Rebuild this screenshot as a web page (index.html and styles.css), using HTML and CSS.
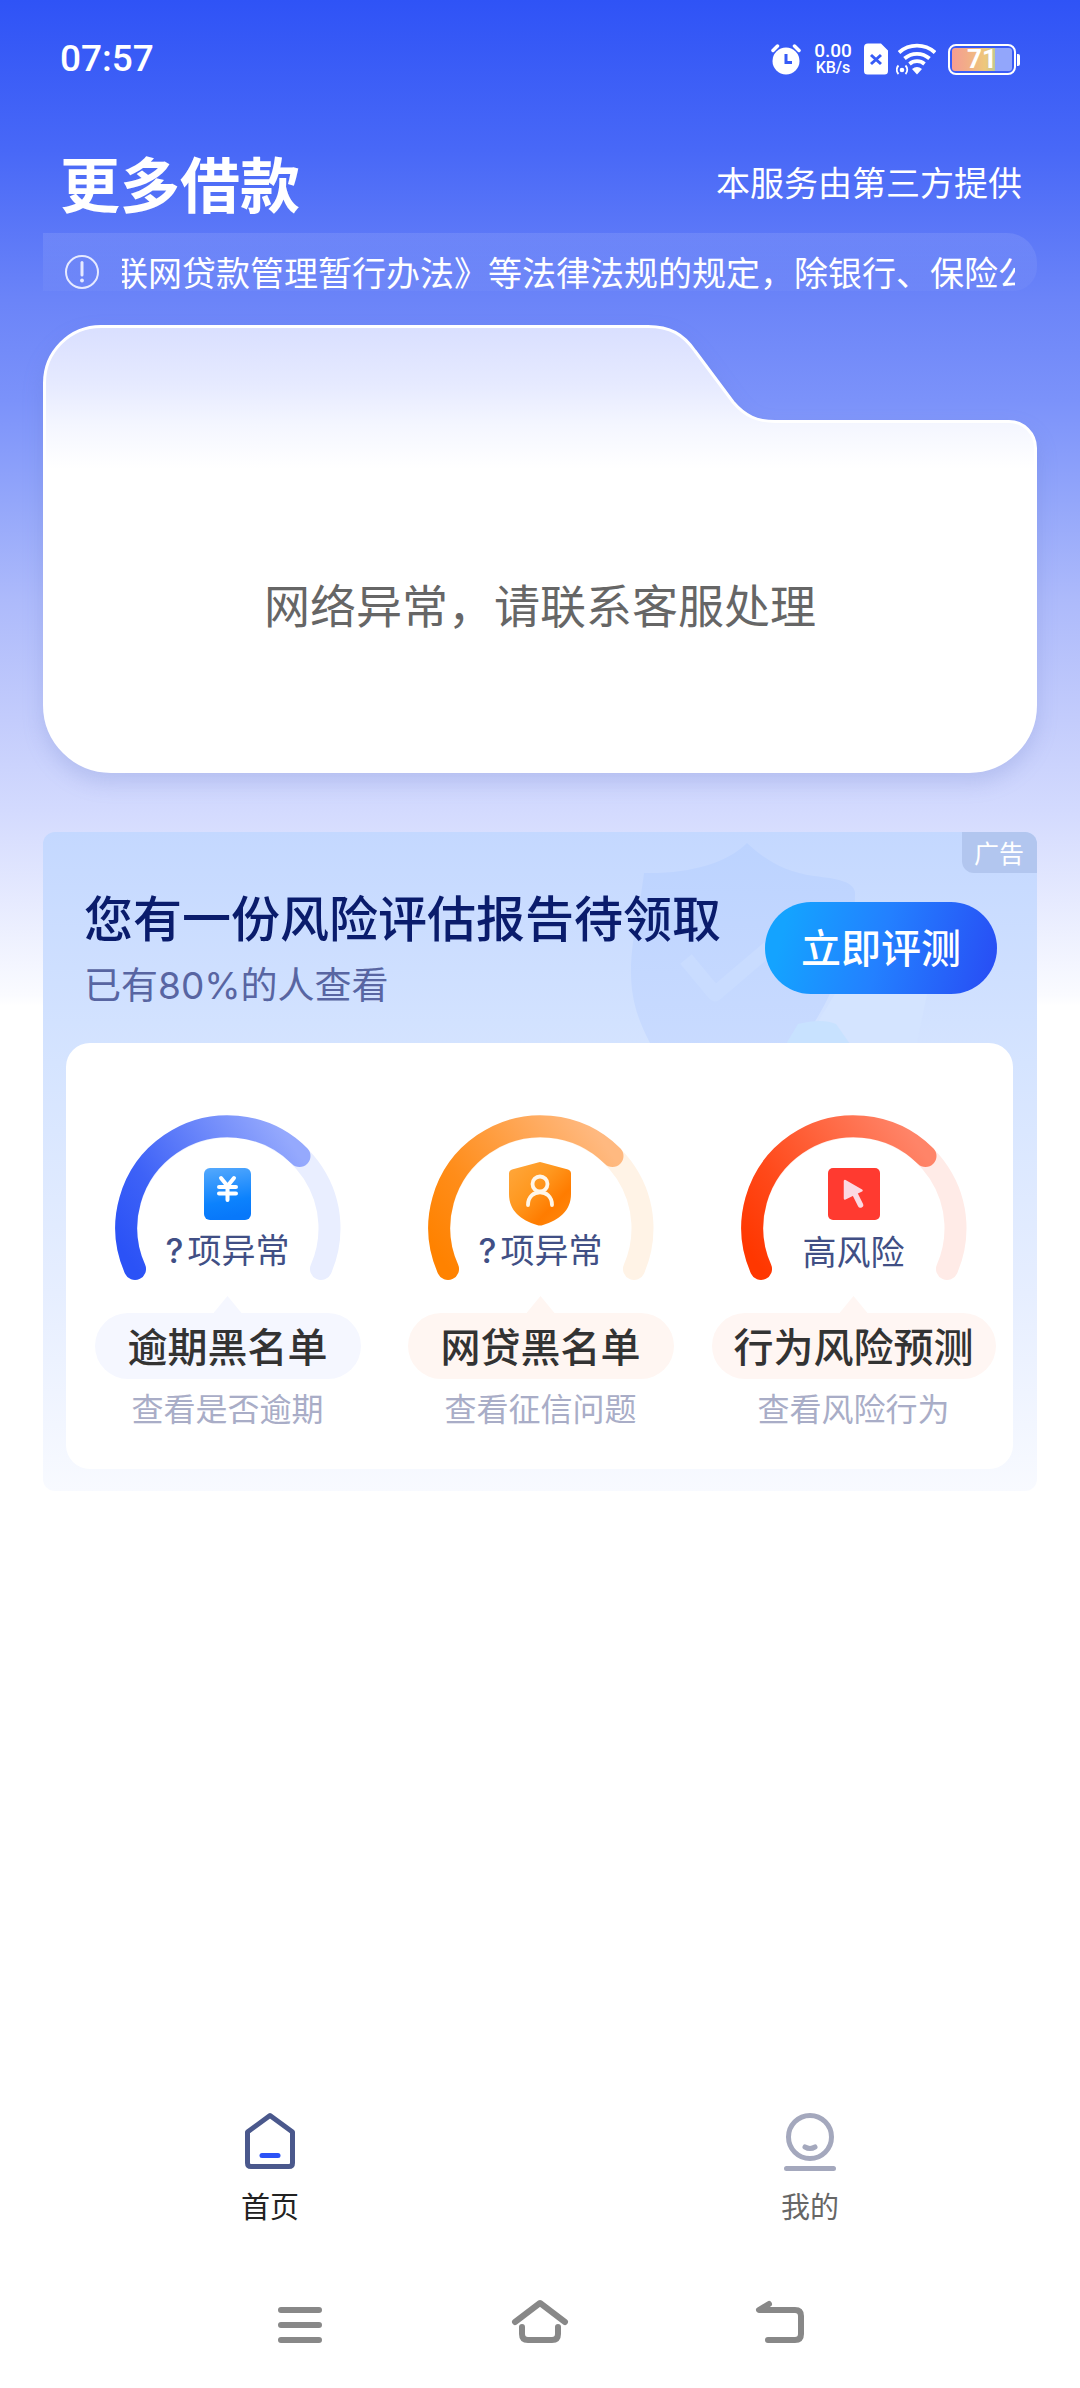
FILE: index.html
```html
<!DOCTYPE html>
<html lang="zh-CN">
<head>
<meta charset="utf-8">
<meta name="viewport" content="width=device-width, initial-scale=1">
<title>更多借款</title>
<link rel="stylesheet" href="styles.css">
</head>
<body>
<div class="status-bar">
  <time class="clock">07:57</time>
  <div class="status-icons">
    <svg class="alarm" width="30" height="32" viewBox="0 0 30 32" aria-hidden="true">
      <circle cx="15" cy="18" r="13.500" fill="#fff"/>
      <path d="M2 7.500 6.500 3M28 7.500 23.500 3" stroke="#fff" stroke-width="3.500" stroke-linecap="round"/>
      <path d="M15 11v8.500h6" fill="none" stroke="#365bf6" stroke-width="3"/>
    </svg>
    <div class="net-speed"><span class="net-value">0.00</span><span class="net-unit">KB/s</span></div>
    <svg class="sim" width="24" height="32" viewBox="0 0 24 32" aria-hidden="true">
      <path d="M4 .5h13l7 7V28a3.500 3.500 0 0 1-3.500 3.500h-17A3.500 3.500 0 0 1 0 28V4.500a4 4 0 0 1 4-4z" fill="#fff"/>
      <path d="m7 12 10 9m0-9-10 9" stroke="#365bf6" stroke-width="3"/>
    </svg>
    <svg class="wifi" width="40" height="32" viewBox="0 0 40 32" aria-hidden="true">
      <g fill="none" stroke="#fff" stroke-width="3.800">
        <path d="M3 9.500a27 27 0 0 1 36 0"/>
        <path d="M8.500 15.500a19 19 0 0 1 25 0"/>
        <path d="M13.500 21a11.500 11.500 0 0 1 15 0"/>
      </g>
      <path d="M16 26a8 8 0 0 1 10 0l-5 5.500z" fill="#fff"/>
      <circle cx="6" cy="27" r="2.300" fill="#fff"/>
      <path d="M2.500 22.500a6 6 0 0 0 0 8.500M9.500 22.500a6 6 0 0 1 0 8.500" fill="none" stroke="#fff" stroke-width="1.800"/>
    </svg>
    <div class="battery"><span class="battery-level">71</span></div>
  </div>
</div>

<header class="page-header">
  <h1 class="page-title">更多借款</h1>
  <p class="provider">本服务由第三方提供</p>
</header>

<main class="content">
  <div class="notice">
    <svg class="notice-icon" width="36" height="36" viewBox="0 0 36 36" aria-hidden="true">
      <circle cx="18" cy="18" r="16" fill="none" stroke="#e6eaff" stroke-width="2"/>
      <path d="M18 8.500v12.500" stroke="#e6eaff" stroke-width="3" stroke-linecap="round"/>
      <circle cx="18" cy="26.500" r="1.900" fill="#e6eaff"/>
    </svg>
    <div class="marquee"><p class="marquee-text">联网贷款管理暂行办法》等法律法规的规定，除银行、保险公司</p></div>
  </div>

  <section class="folder">
    <svg class="folder-shape" viewBox="0 0 994 448" preserveAspectRatio="none" aria-hidden="true">
      <defs>
        <linearGradient id="folderFill" x1="0" y1="0" x2="0" y2="1">
          <stop offset="0" stop-color="#d9dfff"/>
          <stop offset=".13" stop-color="#e6eaff"/>
          <stop offset=".22" stop-color="#f4f6ff"/>
          <stop offset=".32" stop-color="#fff"/>
        </linearGradient>
      </defs>
      <path d="M58 1.500H605C627 1.500 640 9 652 26L690 77C702 91 714 96.500 732 96.500H966A26.500 26.500 0 0 1 992.500 123V380A66.500 66.500 0 0 1 926 446.500H68A66.500 66.500 0 0 1 1.500 380V58A56.500 56.500 0 0 1 58 1.500Z" fill="url(#folderFill)" stroke="#fff" stroke-width="3"/>
    </svg>
    <p class="folder-message">网络异常，请联系客服处理</p>
  </section>

  <section class="promo">
    <svg class="promo-art" width="310" height="211" viewBox="0 0 310 211" aria-hidden="true">
      <defs>
        <linearGradient id="artShield" x1="0" y1="0" x2="0" y2="1">
          <stop offset="0" stop-color="#bcd3ff"/>
          <stop offset="1" stop-color="#c9dbff"/>
        </linearGradient>
      </defs>
      <path d="M117 11C97 31 60 42 14 41C9 82 1 108 1 140C1 170 9 192 26 222H160C200 180 226 110 225 60C223 50 210 47 184 44C156 40 136 29 117 11Z" fill="url(#artShield)"/>
      <path d="m56 127 29 35 54-46" fill="none" stroke="#c9dcff" stroke-width="15" stroke-linejoin="round"/>
      <path d="M205 162h92l-10 49H175z" fill="#d4e4ff"/>
      <path d="M168 192q24-6 38 0l14 20h-64z" fill="#c8e2ff"/>
    </svg>
    <span class="ad-tag">广告</span>
    <div class="promo-head">
      <div class="promo-copy">
        <h2 class="promo-title">您有一份风险评估报告待领取</h2>
        <p class="promo-sub">已有80%的人查看</p>
      </div>
      <button class="promo-button" type="button">立即评测</button>
    </div>
    <ul class="checks">
      <li class="check check-blue">
        <div class="gauge">
          <svg class="gauge-arc" width="226" height="168" viewBox="0 0 226 168" aria-hidden="true">
            <defs>
              <linearGradient id="arcBlue" gradientUnits="userSpaceOnUse" x1="20" y1="155" x2="185" y2="42">
                <stop offset="0" stop-color="#2b52f6"/><stop offset=".3" stop-color="#3e62f7"/><stop offset="1" stop-color="#95a9fd"/>
              </linearGradient>
              <linearGradient id="noteBlue" x1="0" y1="0" x2=".15" y2="1">
                <stop offset="0" stop-color="#55a9fd"/><stop offset=".7" stop-color="#0c82fd"/><stop offset="1" stop-color="#0878fa"/>
              </linearGradient>
            </defs>
            <path class="track" d="M20 155A101.500 101.500 0 1 1 206 155"/>
            <path class="value" d="M20 155A101.500 101.500 0 0 1 184.500 42" stroke="url(#arcBlue)"/>
            <rect x="89" y="54" width="47" height="52" rx="6" fill="url(#noteBlue)"/>
            <path d="m106 64 6.500 8 6.500-8M112.500 72v14M104 73h17M104 79.500h17" fill="none" stroke="#fff" stroke-width="4" stroke-linecap="round"/>
          </svg>
          <p class="gauge-text"><b class="unknown">?</b>项异常</p>
        </div>
        <h3 class="pill">逾期黑名单</h3>
        <p class="check-note">查看是否逾期</p>
      </li>
      <li class="check check-orange">
        <div class="gauge">
          <svg class="gauge-arc" width="226" height="168" viewBox="0 0 226 168" aria-hidden="true">
            <defs>
              <linearGradient id="arcOrange" gradientUnits="userSpaceOnUse" x1="20" y1="155" x2="185" y2="42">
                <stop offset="0" stop-color="#ff8200"/><stop offset=".3" stop-color="#ff8d1a"/><stop offset="1" stop-color="#ffb980"/>
              </linearGradient>
              <linearGradient id="shieldOrange" x1="0" y1="0" x2="1" y2="1">
                <stop offset="0" stop-color="#ffa83e"/><stop offset=".4" stop-color="#ff981f"/><stop offset=".7" stop-color="#ff7c00"/><stop offset="1" stop-color="#ff8a10"/>
              </linearGradient>
            </defs>
            <path class="track" d="M20 155A101.500 101.500 0 1 1 206 155"/>
            <path class="value" d="M20 155A101.500 101.500 0 0 1 184.500 42" stroke="url(#arcOrange)"/>
            <path d="M110 48.500q2-1 4 0l26 7q3 1 3 4V80c0 17-12 26-28 31q-3 1-6 0C93 106 81 97 81 80V59.500q0-3 3-4z" fill="url(#shieldOrange)"/>
            <g fill="none" stroke="#fff6e8" stroke-width="3.800" stroke-linecap="round">
              <circle cx="112" cy="70" r="7.500"/>
              <path d="M100 91c0-17 24-17 24 0"/>
            </g>
          </svg>
          <p class="gauge-text"><b class="unknown">?</b>项异常</p>
        </div>
        <h3 class="pill">网贷黑名单</h3>
        <p class="check-note">查看征信问题</p>
      </li>
      <li class="check check-red">
        <div class="gauge">
          <svg class="gauge-arc" width="226" height="168" viewBox="0 0 226 168" aria-hidden="true">
            <defs>
              <linearGradient id="arcRed" gradientUnits="userSpaceOnUse" x1="20" y1="155" x2="185" y2="42">
                <stop offset="0" stop-color="#ff3700"/><stop offset=".3" stop-color="#ff491a"/><stop offset="1" stop-color="#ff8468"/>
              </linearGradient>
            </defs>
            <path class="track" d="M20 155A101.500 101.500 0 1 1 206 155"/>
            <path class="value" d="M20 155A101.500 101.500 0 0 1 184.500 42" stroke="url(#arcRed)"/>
            <rect x="87" y="54" width="52" height="52" rx="5" fill="#ff3a30"/>
            <path d="M104 67v17.500l16.500-8z" fill="#fbd9e2" stroke="#fbd9e2" stroke-width="2.500" stroke-linejoin="round"/>
            <path d="m113.500 79 6 12" stroke="#fbd9e2" stroke-width="5.500" stroke-linecap="round"/>
          </svg>
          <p class="gauge-text">高风险</p>
        </div>
        <h3 class="pill">行为风险预测</h3>
        <p class="check-note">查看风险行为</p>
      </li>
    </ul>
  </section>
</main>

<nav class="tab-bar">
  <a class="tab tab-active" href="#home">
    <svg width="60" height="60" viewBox="0 0 60 60" fill="none" stroke-linecap="round" stroke-linejoin="round" aria-hidden="true">
      <path d="M30 4.500 52.500 21V52q0 3.500-3.500 3.500H11q-3.500 0-3.500-3.500V21z" stroke="#4a588c" stroke-width="5"/>
      <path d="M22 44.500h16" stroke="#2b52f6" stroke-width="5"/>
    </svg>
    <span>首页</span>
  </a>
  <a class="tab" href="#mine">
    <svg width="60" height="60" viewBox="0 0 60 60" fill="none" stroke="#a4a8bd" stroke-width="5" stroke-linecap="round" aria-hidden="true">
      <circle cx="30" cy="26" r="21.500"/>
      <path d="M25 36q5 3 10 0M6.500 57.500h47"/>
    </svg>
    <span>我的</span>
  </a>
</nav>

<div class="system-nav">
  <button class="system-key" type="button" aria-label="最近任务">
    <svg width="60" height="50" viewBox="0 0 60 50"><path d="M11 12h38M11 27h38M11 42h38"/></svg>
  </button>
  <button class="system-key" type="button" aria-label="主屏幕">
    <svg width="60" height="50" viewBox="0 0 60 50"><path d="M5 24 30 5l25 19M12 29v7q0 6 6 6h24q6 0 6-6v-7"/></svg>
  </button>
  <button class="system-key" type="button" aria-label="返回">
    <svg width="60" height="50" viewBox="0 0 60 50"><path d="M19 6 9 12h36q6 0 6 6v18q0 6-6 6H18"/></svg>
  </button>
</div>
</body>
</html>
```
FILE: styles.css
```css
* {
  box-sizing: border-box;
  margin: 0;
  padding: 0;
}

body {
  display: flex;
  flex-direction: column;
  min-height: 100vh;
  background: #fff linear-gradient(
    #2f53f6 0,
    #4868f7 150px,
    #6b84f8 300px,
    #7b92fa 400px,
    #93a6fa 500px,
    #adbafb 600px,
    #c3ccfc 720px,
    #d3dafe 810px,
    #fafbff 995px,
    #fff 1006px
  ) no-repeat;
  color: #333;
  font-family: "Noto Sans CJK SC", sans-serif;
}

h1, h2, h3 {
  font-weight: 500;
}

ul {
  list-style: none;
}

svg {
  display: block;
}

button {
  border: 0;
  background: none;
  font-family: inherit;
}

/* Status bar */
.status-bar {
  display: flex;
  align-items: center;
  justify-content: space-between;
  height: 118px;
  padding: 0 60px;
  color: #fff;
  font-family: Roboto, sans-serif;
  font-weight: 500;
}

.clock {
  font-size: 37px;
  line-height: 44px;
}

.status-icons {
  display: flex;
  align-items: center;
}

.net-speed {
  display: flex;
  flex-direction: column;
  align-items: center;
  width: 40px;
  margin: 0 11px 0 12px;
}

.net-value {
  font-size: 19px;
  line-height: 18px;
}

.net-unit {
  font-size: 16px;
  line-height: 16px;
}

.wifi {
  margin: 0 12px 0 8px;
}

.battery {
  position: relative;
  width: 68px;
  height: 31px;
  padding: 2px;
  margin-right: 4px;
  border: 2px solid #fff;
  border-radius: 8px;
}

.battery::after {
  content: "";
  position: absolute;
  top: 8px;
  right: -6px;
  width: 3px;
  height: 12px;
  border-radius: 0 2px 2px 0;
  background: #fff;
}

.battery-level {
  display: block;
  height: 23px;
  border-radius: 3px;
  background: linear-gradient(90deg, #f59d92 0, #f2ad88 25%, #eec87c 55%, #c3c98f 71%, #92a6fb 71%);
  font-size: 26px;
  font-weight: 700;
  line-height: 23px;
  text-align: center;
}

/* Header */
.page-header {
  display: flex;
  align-items: center;
  justify-content: space-between;
  padding: 19px 58px 6px 60px;
  color: #fff;
}

.page-title {
  font-size: 60px;
  font-weight: 700;
  line-height: 90px;
}

.provider {
  font-size: 34px;
  line-height: 50px;
}

.content {
  flex: 1;
  padding: 0 43px;
}

/* Scrolling notice */
.notice {
  display: flex;
  align-items: center;
  height: 58px;
  padding: 19px 22px 0 21px;
  border-radius: 0 30px 24px 0;
  background: linear-gradient(rgba(255, 255, 255, .1), rgba(255, 255, 255, .03));
}

.notice-icon {
  flex: none;
}

.marquee {
  flex: 1;
  min-width: 0;
  margin-left: 22px;
  overflow: hidden;
}

.marquee-text {
  margin-left: -8px;
  color: #fff;
  font-size: 34px;
  line-height: 40px;
  white-space: nowrap;
}

/* Folder card */
.folder {
  position: relative;
  margin-top: 34px;
  padding: 247px 24px 139px;
}

.folder-shape {
  position: absolute;
  inset: 0;
  width: 100%;
  height: 100%;
  overflow: visible;
  filter: drop-shadow(0 10px 10px rgba(90, 110, 190, .2));
}

.folder-message {
  position: relative;
  color: #666;
  font-size: 46px;
  line-height: 62px;
  text-align: center;
}

/* Promo panel */
.promo {
  position: relative;
  margin-top: 59px;
  padding: 0 24px 22px 23px;
  border-radius: 12px;
  background: linear-gradient(#c4d8ff, #d5e4ff 35%, #e6eeff 70%, #f8faff);
  overflow: hidden;
}

.promo-art {
  position: absolute;
  top: 0;
  right: 97px;
}

.ad-tag {
  position: absolute;
  top: 0;
  right: 0;
  padding: 0 13px 1px 12px;
  border-radius: 0 0 0 12px;
  background: #b2c6ef;
  color: #fff;
  font-size: 25px;
  line-height: 40px;
}

.promo-head {
  position: relative;
  display: flex;
  align-items: flex-start;
  justify-content: space-between;
  height: 211px;
  padding: 49px 16px 0 18px;
}

.promo-title {
  color: #0a1c6c;
  font-size: 49px;
  line-height: 70px;
}

.promo-sub {
  margin-top: 8px;
  color: #5865a2;
  font-family: Inter, "Noto Sans CJK SC", sans-serif;
  font-size: 37px;
  line-height: 54px;
}

.promo-button {
  width: 232px;
  height: 92px;
  margin-top: 21px;
  padding-bottom: 4px;
  border-radius: 46px;
  background: linear-gradient(105deg, #14a3ff 10%, #2380ff 50%, #2850f5 95%);
  color: #fff;
  font-size: 40px;
  font-weight: 500;
}

.checks {
  display: grid;
  grid-template-columns: repeat(3, 1fr);
  padding: 71px 3px 40px 5px;
  border-radius: 24px;
  background: #fff;
}

.check {
  display: flex;
  flex-direction: column;
  align-items: center;
}

.check-blue {
  --track: #e9eeff;
  --pill: #f5f7ff;
}

.check-orange {
  --track: #fff3e6;
  --pill: #fff6f2;
}

.check-red {
  --track: #ffebe7;
  --pill: #fff6f3;
}

.gauge {
  position: relative;
}

.track,
.value {
  fill: none;
  stroke-width: 22px;
  stroke-linecap: round;
}

.track {
  stroke: var(--track);
}

.gauge-text {
  position: absolute;
  right: 0;
  bottom: 6px;
  left: 0;
  color: #414f85;
  font-size: 34px;
  line-height: 50px;
  text-align: center;
}

.unknown {
  margin-right: 4px;
  font-family: Inter, sans-serif;
  font-weight: 500;
}

.pill {
  position: relative;
  min-width: 266px;
  margin-top: 31px;
  padding: 0 22px 2px;
  border-radius: 33px;
  background: var(--pill);
  font-size: 40px;
  line-height: 64px;
  text-align: center;
}

.pill::before {
  content: "";
  position: absolute;
  bottom: 100%;
  left: 50%;
  width: 28px;
  height: 17px;
  margin-left: -14px;
  background: var(--pill);
  clip-path: polygon(50% 0, 100% 100%, 0 100%);
}

.check-note {
  margin-top: 6px;
  color: #a9adc7;
  font-size: 32px;
  line-height: 44px;
}

/* Tab bar */
.tab-bar {
  display: flex;
  padding: 11px 0 33px;
}

.tab {
  display: flex;
  flex: 1;
  flex-direction: column;
  align-items: center;
  gap: 14px;
  color: #666;
  font-size: 29px;
  line-height: 40px;
  text-decoration: none;
}

.tab-active {
  color: #222;
}

/* System navigation keys */
.system-nav {
  display: flex;
  align-items: center;
  justify-content: center;
  gap: 180px;
  height: 130px;
}

.system-key svg {
  fill: none;
  stroke: #888;
  stroke-width: 6px;
  stroke-linecap: round;
  stroke-linejoin: round;
}
```
